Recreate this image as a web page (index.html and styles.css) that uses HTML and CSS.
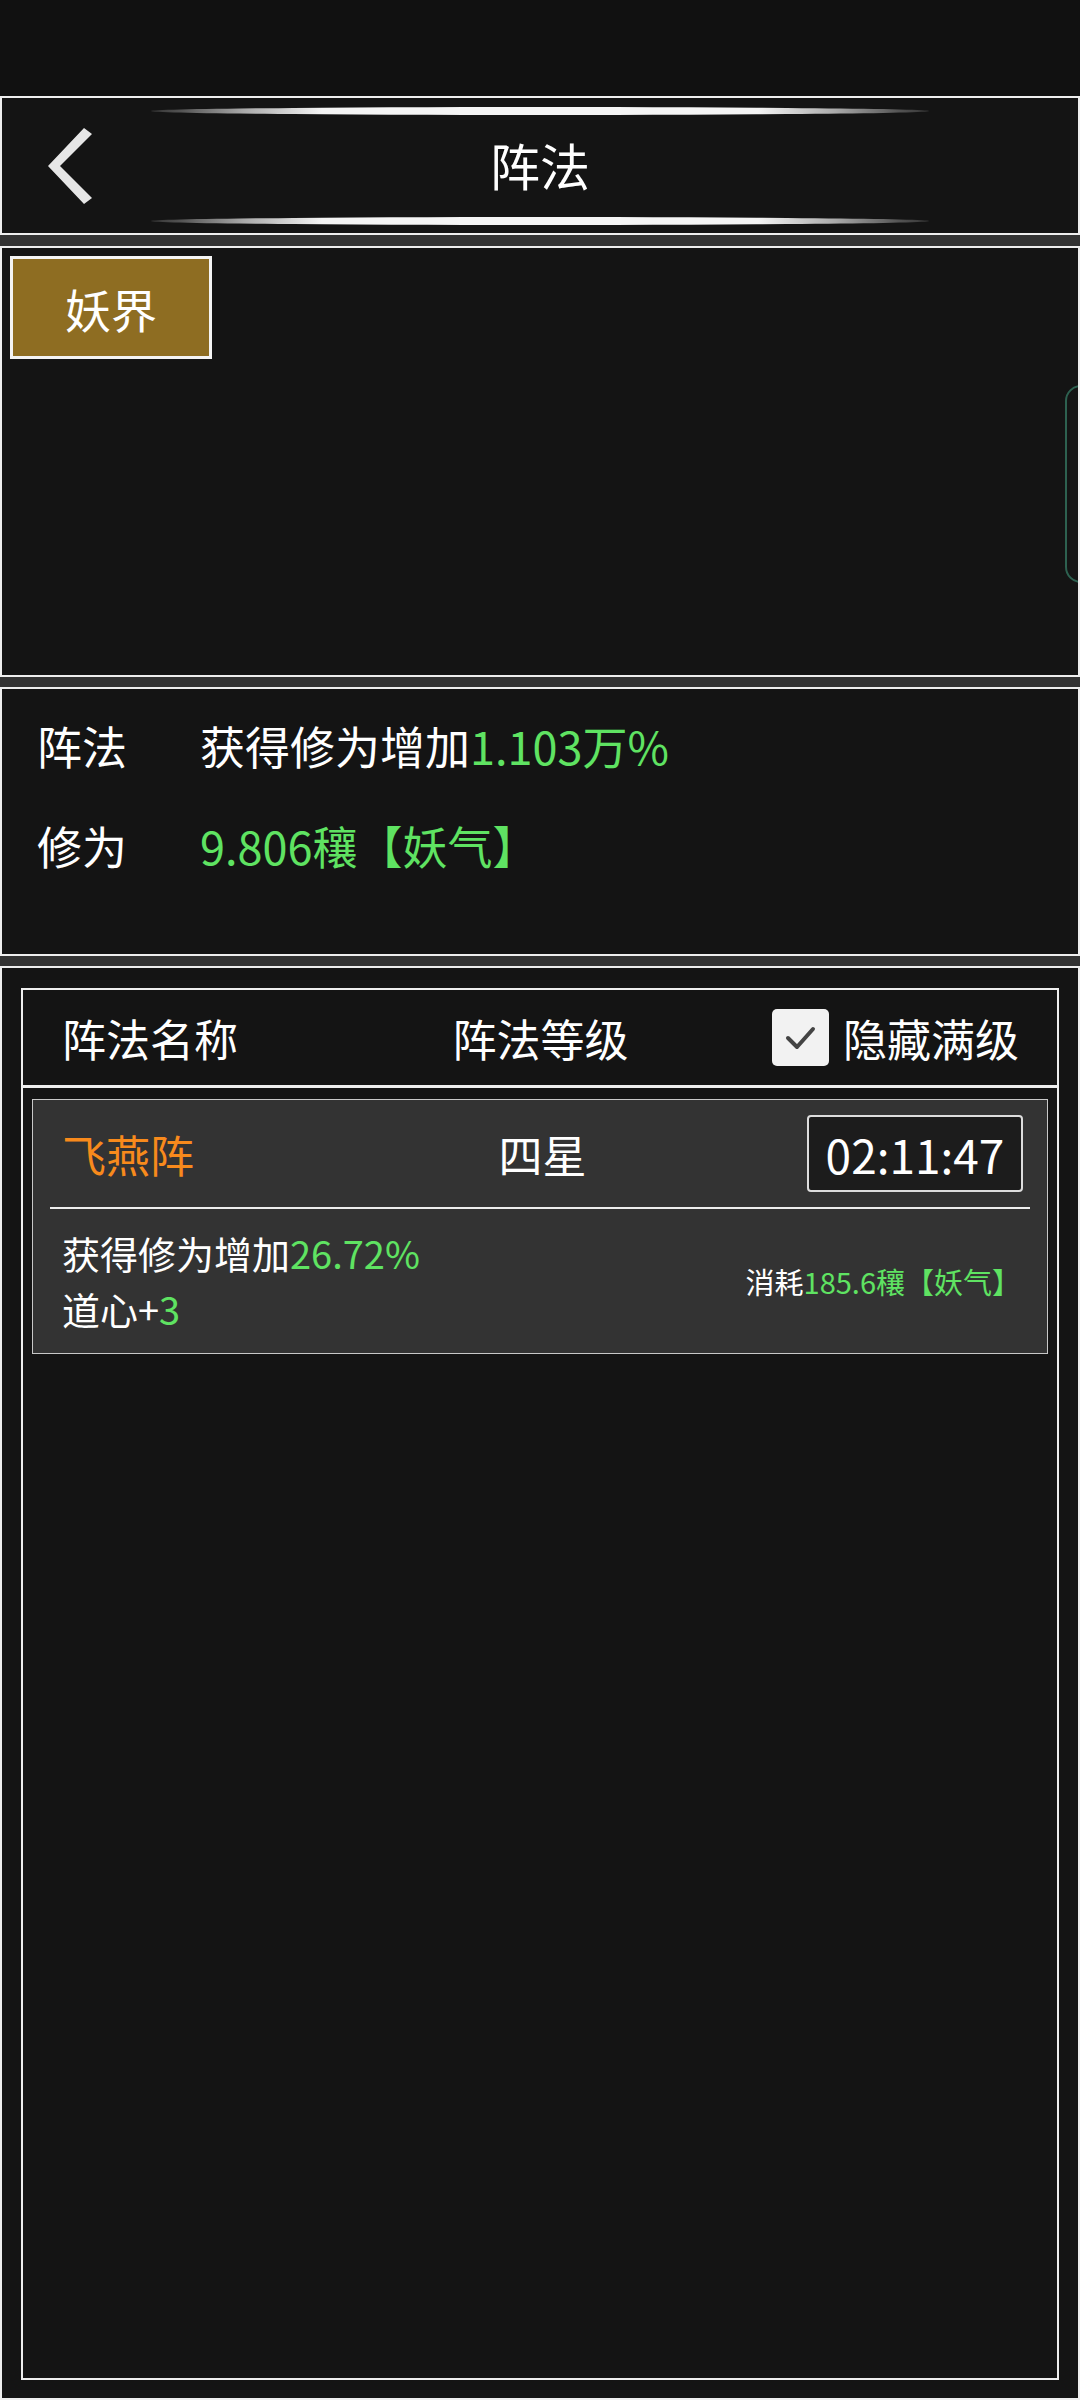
FILE: index.html
```html
<!DOCTYPE html>
<html lang="zh-CN">
<head>
    <meta charset="UTF-8">
    <meta name="viewport" content="width=device-width, initial-scale=1.0">
    <title>阵法</title>
    <link rel="stylesheet" href="styles.css">
</head>
<body>
    <div class="status-bar"></div>

    <div class="header">
        <div class="glow"></div>
        <div class="title-row">
            <div class="back">
                <svg width="52" height="80" viewBox="0 0 52 80">
                    <polygon points="40,2 48,8 16,40 48,72 40,78 4,40" fill="#e6e6e6"/>
                </svg>
            </div>
            <div class="title">阵法</div>
            <div></div>
        </div>
        <div class="glow"></div>
    </div>

    <div class="panel realm-panel">
        <div class="realm-tab">妖界</div>
        <div class="side-handle"></div>
    </div>

    <div class="panel summary-panel">
        <div class="summary-row">
            <span class="label">阵法</span>
            <span>获得修为增加<span class="green">1.103万%</span></span>
        </div>
        <div class="summary-row">
            <span class="label">修为</span>
            <span class="green">9.806穰【妖气】</span>
        </div>
    </div>

    <div class="panel list-panel">
        <div class="list-box">
            <div class="list-head">
                <div>阵法名称</div>
                <div class="center">阵法等级</div>
                <div class="hide-full">
                    <span class="checkbox">
                        <svg width="57" height="57" viewBox="0 0 57 57">
                            <polyline points="16,29 25,38 41,20" fill="none" stroke="#444444" stroke-width="4" stroke-linecap="round" stroke-linejoin="round"/>
                        </svg>
                    </span>
                    <span>隐藏满级</span>
                </div>
            </div>

            <div class="card">
                <div class="card-top">
                    <div class="orange">飞燕阵</div>
                    <div class="center">四星</div>
                    <div class="timer">02:11:47</div>
                </div>
                <div class="card-line"></div>
                <div class="card-bottom">
                    <div class="effects">
                        <div>获得修为增加<span class="green">26.72%</span></div>
                        <div>道心+<span class="green">3</span></div>
                    </div>
                    <div class="cost">消耗<span class="green">185.6穰【妖气】</span></div>
                </div>
            </div>
        </div>
    </div>
</body>
</html>
```

FILE: styles.css
```css
:root {
    --bg: #141414;
    --line: #eeeeee;
    --green: #5fe362;
    --orange: #f88a1c;
}

* {
    box-sizing: border-box;
}

body {
    margin: 0;
    width: 1080px;
    height: 2400px;
    background: #333333;
    color: #ffffff;
    font-family: "Noto Sans CJK SC", "Noto Sans", sans-serif;
    display: flex;
    flex-direction: column;
    overflow: hidden;
}

.status-bar {
    height: 96px;
    background: #111111;
}

/* 顶部标题栏 */
.header {
    height: 139px;
    background: var(--bg);
    border: 2px solid var(--line);
    padding-top: 9px;
    display: flex;
    flex-direction: column;
    align-items: center;
}

.glow {
    width: 778px;
    height: 8px;
    border-radius: 50%;
    background: linear-gradient(90deg, #333 0%, #555 4%, #aaa 12%, #f4f4f4 22%, #f4f4f4 78%, #aaa 88%, #555 96%, #333 100%);
}

.title-row {
    width: 100%;
    height: 102px;
    display: grid;
    grid-template-columns: 1fr auto 1fr;
    align-items: center;
}

.back {
    padding-left: 42px;
    display: flex;
    align-items: center;
}

.title {
    font-size: 50px;
    line-height: 1;
    margin-top: -4px;
}

.panel {
    background: var(--bg);
    border: 2px solid var(--line);
}

.realm-panel {
    height: 431px;
    margin-top: 11px;
    padding: 8px;
    position: relative;
    overflow: hidden;
}

.realm-tab {
    width: 202px;
    height: 103px;
    background: #8e6d22;
    border: 3px solid #f4f4f4;
    display: flex;
    align-items: center;
    justify-content: center;
    font-size: 46px;
}

.side-handle {
    position: absolute;
    top: 137px;
    left: 1063px;
    width: 60px;
    height: 198px;
    border: 2px solid #2d6150;
    border-radius: 16px;
}

.summary-panel {
    height: 269px;
    margin-top: 10px;
    padding: 6px 0 0 35px;
    font-size: 45px;
}

.summary-row {
    height: 100px;
    display: flex;
    align-items: center;
}

.label {
    width: 163px;
}

.green {
    color: var(--green);
}

.orange {
    color: var(--orange);
}

.center {
    text-align: center;
}

.list-panel {
    flex: 1;
    margin-top: 10px;
    padding: 20px 19px 18px 19px;
    display: flex;
}

.list-box {
    flex: 1;
    border: 2px solid var(--line);
    padding: 0 9px;
}

.list-head {
    height: 98px;
    margin: 0 -9px;
    padding: 0 38px 0 39px;
    border-bottom: 3px solid var(--line);
    display: grid;
    grid-template-columns: 1fr auto 1fr;
    align-items: center;
    font-size: 44px;
}

.hide-full {
    justify-self: end;
    display: flex;
    align-items: center;
    gap: 14px;
}

.checkbox {
    width: 57px;
    height: 57px;
    background: #f2f2f2;
    border-radius: 5px;
    display: flex;
}

.card {
    margin-top: 11px;
    background: #333333;
    border: 1px solid #c8c8c8;
}

.card-top {
    height: 107px;
    padding: 0 24px 0 29px;
    display: grid;
    grid-template-columns: 1fr auto 1fr;
    align-items: center;
    font-size: 44px;
}

.timer {
    justify-self: end;
    width: 216px;
    height: 77px;
    border: 2px solid #dddddd;
    border-radius: 4px;
    background: #1c1c1c;
    display: flex;
    align-items: center;
    justify-content: center;
    font-size: 46px;
}

.card-line {
    height: 2px;
    margin: 0 17px;
    background: var(--line);
}

.card-bottom {
    height: 144px;
    padding: 0 26px 0 29px;
    display: flex;
    align-items: center;
    justify-content: space-between;
}

.effects {
    font-size: 38px;
    line-height: 56px;
}

.cost {
    font-size: 29px;
}
```
